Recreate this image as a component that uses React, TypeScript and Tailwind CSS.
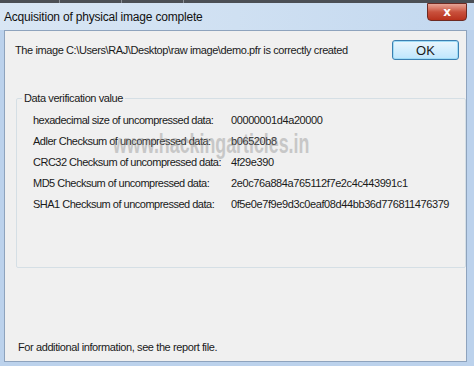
const rows = [
  ['hexadecimal size of uncompressed data:', '00000001d4a20000'],
  ['Adler Checksum of uncompressed data:', 'b06520b8'],
  ['CRC32 Checksum of uncompressed data:', '4f29e390'],
  ['MD5 Checksum of uncompressed data:', '2e0c76a884a765112f7e2c4c443991c1'],
  ['SHA1 Checksum of uncompressed data:', '0f5e0e7f9e9d3c0eaf08d44bb36d776811476379'],
]

export default function App() {
  return (
    <div
      className="relative w-[474px] h-[366px] overflow-hidden bg-[#bcd2ec] text-[#1a1a1a]"
      style={{ fontFamily: '"Liberation Sans", Arial, sans-serif' }}
    >
      {/* background taskbar strip */}
      <div className="flex h-[3px] bg-[#4b4f55]">
        <div className="w-[60px] border-r border-[#8a8f96]" />
        <div className="w-[62px] border-r border-[#8a8f96]" />
        <div className="w-[62px] border-r border-[#8a8f96]" />
      </div>

      {/* title bar */}
      <div className="flex h-[27px] items-center bg-gradient-to-r from-[#d9e6f4] via-[#cfe0f2] to-[#c3d8ef] pl-[4px]">
        <span className="whitespace-nowrap text-[12px] tracking-[-0.2px] text-[#111]">
          Acquisition of physical image complete
        </span>
      </div>

      <div className="absolute right-[7px] top-[3px] flex h-[18px] w-[40px] items-center justify-center rounded-b-[4px] border border-[#6d2a22] bg-gradient-to-b from-[#e6a496] via-[#c9503c] to-[#b8311c]">
        <span className="text-[12px] font-bold leading-none text-white" style={{ fontFamily: '"DejaVu Sans", sans-serif' }}>
          x
        </span>
      </div>

      {/* client area */}
      <div className="ml-[4px] mr-[7px] flex h-[332px] flex-col border border-[#8ea3bd] bg-[#f0f0f0] text-[11px] tracking-[-0.4px]">
        <div className="flex items-start justify-between pl-[10px] pr-[7px] pt-[9px]">
          <p className="whitespace-nowrap pt-[2px]">
            The image C:\Users\RAJ\Desktop\raw image\demo.pfr is correctly created
          </p>
          <button className="h-[20px] w-[67px] rounded-[3px] border border-[#3c7fb1] bg-gradient-to-b from-[#eaf6fd] to-[#bee6fd] text-[13px] tracking-normal shadow-[inset_0_0_0_1px_#9fdcf6]">
            OK
          </button>
        </div>

        <fieldset className="relative mx-[11px] mt-[33px] h-[175px] rounded-[2px] border border-[#d5dfe5] px-[16px] pt-[6px]">
          <legend className="ml-[-11px] px-[2px] leading-none">Data verification value</legend>
          <div className="flex flex-col">
            {rows.map(([label, value]) => (
              <div key={label} className="flex h-[21px] items-center whitespace-nowrap">
                <span className="w-[198px] tracking-[-0.5px]">{label}</span>
                <span>{value}</span>
              </div>
            ))}
          </div>
          <div className="pointer-events-none absolute left-[96px] top-[20px] origin-left scale-x-[0.66] whitespace-nowrap text-[27px] font-bold tracking-normal text-[#8c8c8c] opacity-40">
            www.hackingarticles.in
          </div>
        </fieldset>

        <div className="flex-1" />
        <p className="pb-[6px] pl-[13px]">For additional information, see the report file.</p>
      </div>
    </div>
  )
}
